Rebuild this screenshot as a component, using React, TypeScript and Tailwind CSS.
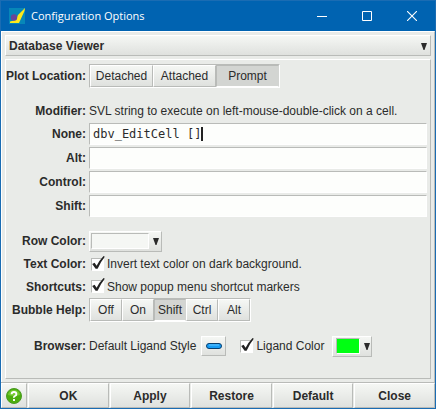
import { useState, type ReactNode } from "react";

const RAISED =
  "border border-t-white border-l-white border-b-[#b9bbb8] border-r-[#b9bbb8] bg-linear-to-b from-[#f5f7f4] to-[#dfe1de]";

function Row({ label, htmlFor, className = "h-6", children }: { label: string; htmlFor?: string; className?: string; children: ReactNode }) {
  return (
    <div className={`flex items-center gap-[3px] ${className}`}>
      <label htmlFor={htmlFor} className="w-20 shrink-0 text-right font-bold whitespace-nowrap">
        {label}
      </label>
      <div className="flex h-full min-w-0 flex-1 items-center">{children}</div>
    </div>
  );
}

function Segments({ label, options, initial, width }: { label: string; options: string[]; initial: string; width: string }) {
  const [value, setValue] = useState(initial);
  return (
    <div
      role="group"
      aria-label={label}
      className="flex h-6 border border-t-[#b9bbb8] border-l-[#b9bbb8] border-r-white border-b-white"
    >
      {options.map((o) => (
        <button
          key={o}
          type="button"
          aria-pressed={o === value}
          onClick={() => setValue(o)}
          className={`${width} ${
            o === value
              ? "border border-t-[#b9bbb8] border-l-[#b9bbb8] border-r-[#d3d5d2] border-b-white bg-[#d3d5d2]"
              : RAISED
          }`}
        >
          {o}
        </button>
      ))}
    </div>
  );
}

function Check({ id, children }: { id: string; children: ReactNode }) {
  return (
    <label htmlFor={id} className="flex items-center gap-[3px] whitespace-nowrap">
      <span className="relative ml-0.5 block size-[13px]">
        <input
          id={id}
          type="checkbox"
          defaultChecked
          className="peer block size-[13px] appearance-none border border-t-[#b9bbb8] border-l-[#b9bbb8] border-r-white border-b-white bg-white"
        />
        <svg viewBox="0 0 14 15" className="pointer-events-none absolute -top-0.5 left-0 hidden h-[15px] w-[14px] peer-checked:block">
          <path d="M1.2 8 L3.6 6.8 L5.6 9.8 Q8.4 4.2 12.6 0 L13.8 .8 Q9.4 6.2 6.6 12.8 L4.6 12.8 Z" fill="#222" />
        </svg>
      </span>
      {children}
    </label>
  );
}

function Arrow() {
  return (
    <svg viewBox="0 0 6 7" className="h-[7px] w-1.5 shrink-0" aria-hidden="true">
      <path d="M0 0h6L3.5 7h-1z" fill="#2b2b2b" />
    </svg>
  );
}

export default function App() {
  return (
    <main className="flex flex-col border border-[#1a6cb3] bg-[#e9ebe8] font-['Liberation_Sans',Arial,sans-serif] text-[12px] leading-4 text-[#2b2b2b]">
      <header className="flex h-[30px] items-center bg-[#0063b1] text-white">
        <svg viewBox="0 0 16 16" className="ml-2 size-4" aria-hidden="true">
          <rect width="16" height="16" fill="#0787b8" />
          <path d="M16 0 L15.5 3 L10 15 L1 15 L1 13.5 L7 12 L9 7 L13 3 Z" fill="#ffe81a" />
          <circle cx="5" cy="9.5" r="3.2" fill="#684698" />
        </svg>
        <h1 className="ml-1.5 flex-1 font-['Open_Sans','Noto_Sans',sans-serif] text-[11px]">Configuration Options</h1>
        <button type="button" aria-label="Minimize" className="flex h-full w-[45px] items-center justify-center">
          <svg viewBox="0 0 10 10" className="size-[10px]"><path d="M0 5.5h10" stroke="#fff" /></svg>
        </button>
        <button type="button" aria-label="Maximize" className="flex h-full w-[45px] items-center justify-center">
          <svg viewBox="0 0 10 10" className="size-[10px]"><path d="M.5 .5h9v9h-9z" fill="none" stroke="#fff" /></svg>
        </button>
        <button type="button" aria-label="Close window" className="flex h-full w-[46px] items-center justify-center">
          <svg viewBox="0 0 10 10" className="size-[10px]"><path d="M0 0L10 10M10 0L0 10" stroke="#fff" strokeWidth="1.1" /></svg>
        </button>
      </header>

      <div className="flex flex-col gap-[3px] border-t border-r border-l border-t-white border-r-[#b9bbb8] border-l-white px-[3px] pt-[3px] pb-[3px]">
        <div className={`relative h-[21px] ${RAISED}`}>
          <select aria-label="Section" className="block h-full w-full appearance-none bg-transparent pl-[3px] text-[12px] font-bold outline-none">
            <option>Database Viewer</option>
          </select>
          <span className="pointer-events-none absolute inset-y-0 right-[3px] flex items-center pt-0.5">
            <Arrow />
          </span>
        </div>

        <section className="flex flex-col border border-t-white border-l-white border-r-[#b9bbb8] border-b-[#b9bbb8] pt-1 pr-[3px] pb-5">
          <Row label="Plot Location:">
            <Segments label="Plot Location" options={["Detached", "Attached", "Prompt"]} initial="Prompt" width="w-[63px]" />
          </Row>
          <Row label="Modifier:" className="mt-[11px] h-[23px]">
            <span className="whitespace-nowrap">SVL string to execute on left-mouse-double-click on a cell.</span>
          </Row>
          {["None", "Alt", "Control", "Shift"].map((name) => (
            <Row key={name} label={`${name}:`} htmlFor={name}>
              <span className="flex h-[22px] w-full items-center border border-t-[#b9bbb8] border-l-[#b9bbb8] border-r-white border-b-white bg-[#fdfefc] pl-[3px]">
                <input
                  id={name}
                  defaultValue={name === "None" ? "dbv_EditCell []" : ""}
                  size={15}
                  className={`h-full min-w-0 bg-transparent font-['DejaVu_Sans_Mono','Liberation_Mono',monospace] text-[12px] outline-none ${
                    name === "None" ? "w-[108px]" : "w-full"
                  }`}
                />
                {name === "None" && <span className="h-[14px] w-0.5 bg-[#222]" />}
              </span>
            </Row>
          ))}
          <Row label="Row Color:" className="mt-[11px] h-6">
            <button type="button" aria-label="Row Color" className={`flex h-[21px] w-[73px] items-center gap-1 pl-px ${RAISED}`}>
              <span className="h-4 w-[58px] border border-t-[#b9bbb8] border-l-[#b9bbb8] border-r-white border-b-white bg-[#f5f7f4]" />
              <Arrow />
            </button>
          </Row>
          <Row label="Text Color:" className="h-[22px]">
            <Check id="invert">Invert text color on dark background.</Check>
          </Row>
          <Row label="Shortcuts:" className="h-[23px]">
            <Check id="shortcuts">Show popup menu shortcut markers</Check>
          </Row>
          <Row label="Bubble Help:">
            <Segments label="Bubble Help" options={["Off", "On", "Shift", "Ctrl", "Alt"]} initial="Shift" width="w-8" />
          </Row>
          <Row label="Browser:" className="mt-3 h-6">
            <span className="whitespace-nowrap">Default Ligand Style</span>
            <button type="button" aria-label="Default Ligand Style" className={`ml-[5px] flex h-5 w-[25px] items-center justify-center ${RAISED}`}>
              <svg viewBox="0 0 16 6" className="h-1.5 w-4">
                <rect x=".5" y=".5" width="15" height="5" rx="2.5" fill="#169cf5" stroke="#063f70" />
                <path d="M3 2h10" stroke="#63c6ff" />
              </svg>
            </button>
            <span className="ml-3">
              <Check id="ligand">Ligand Color</Check>
            </span>
            <button type="button" aria-label="Ligand Color" className={`ml-2 flex h-[21px] w-10 items-center gap-1 pl-[3px] ${RAISED}`}>
              <span className="h-4 w-6 border border-t-[#b9bbb8] border-l-[#b9bbb8] border-r-white border-b-white bg-[#00ff12]" />
              <Arrow />
            </button>
          </Row>
        </section>
      </div>

      <footer className="flex h-[26px] gap-px border-t border-[#b9bbb8]">
        <button type="button" aria-label="Help" className={`flex w-[26px] items-center justify-center ${RAISED}`}>
          <svg viewBox="0 0 16 16" className="size-4">
            <circle cx="8" cy="8" r="7.5" fill="#4cae0c" stroke="#4a9a24" />
            <path d="M2 7a6 5 0 0 1 12 0Q8 9 2 7z" fill="#74c92f" />
            <path d="M5.6 6.2Q5.7 4 8 4t2.4 2Q10.4 7.3 9 8T8 9.8M8 11v2" fill="none" stroke="#fff" strokeWidth="1.9" />
          </svg>
        </button>
        {["OK", "Apply", "Restore", "Default", "Close"].map((t) => (
          <button key={t} type="button" className={`flex-1 text-[12px] font-bold ${RAISED}`}>
            {t}
          </button>
        ))}
      </footer>
    </main>
  );
}
